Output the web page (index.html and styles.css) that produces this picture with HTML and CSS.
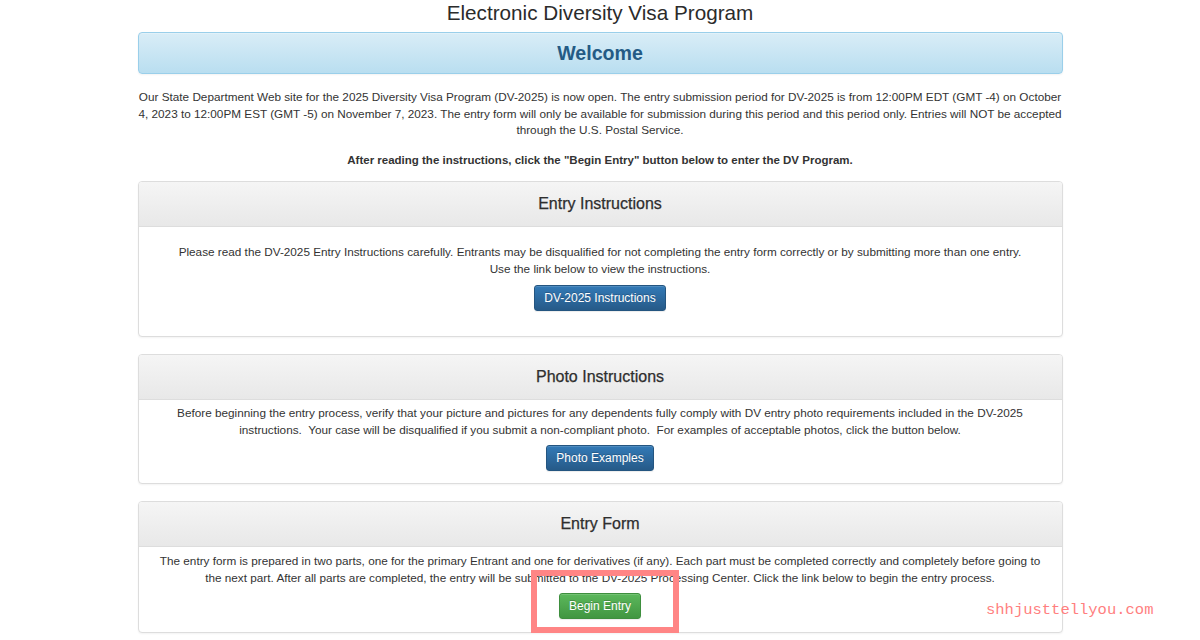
FILE: index.html
```html
<!DOCTYPE html>
<html lang="en">
<head>
<meta charset="utf-8">
<title>Electronic Diversity Visa Program</title>
<link rel="stylesheet" href="styles.css">
</head>
<body>
<div class="container">
  <h1 class="site-title">Electronic Diversity Visa Program</h1>
  <div class="welcome">Welcome</div>
  <p class="intro">Our State Department Web site for the 2025 Diversity Visa Program (DV-2025) is now open. The entry submission period for DV-2025 is from 12:00PM EDT (GMT -4) on October<br>4, 2023 to 12:00PM EST (GMT -5) on November 7, 2023. The entry form will only be available for submission during this period and this period only. Entries will NOT be accepted<br>through the U.S. Postal Service.</p>
  <p class="lead">After reading the instructions, click the "Begin Entry" button below to enter the DV Program.</p>

  <section class="panel">
    <div class="panel-heading">Entry Instructions</div>
    <div class="panel-body panel-body-first">
      <p class="panel-text">Please read the DV-2025 Entry Instructions carefully. Entrants may be disqualified for not completing the entry form correctly or by submitting more than one entry.<br>Use the link below to view the instructions.</p>
      <a class="btn btn-blue btn-first" href="#">DV-2025 Instructions</a>
    </div>
  </section>

  <section class="panel">
    <div class="panel-heading">Photo Instructions</div>
    <div class="panel-body">
      <p class="panel-text">Before beginning the entry process, verify that your picture and pictures for any dependents fully comply with DV entry photo requirements included in the DV-2025 instructions.&nbsp; Your case will be disqualified if you submit a non-compliant photo.&nbsp; For examples of acceptable photos, click the button below.</p>
      <a class="btn btn-blue" href="#">Photo Examples</a>
    </div>
  </section>

  <section class="panel">
    <div class="panel-heading">Entry Form</div>
    <div class="panel-body panel-body-last">
      <p class="panel-text">The entry form is prepared in two parts, one for the primary Entrant and one for derivatives (if any). Each part must be completed correctly and completely before going to the next part. After all parts are completed, the entry will be submitted to the DV-2025 Processing Center. Click the link below to begin the entry process.</p>
      <a class="btn btn-green" href="#">Begin Entry</a>
    </div>
  </section>
</div>
<div class="highlight-box"></div>
<div class="watermark">shhjusttellyou.com</div>
</body>
</html>
```
FILE: styles.css
```css
html, body {
  margin: 0;
  padding: 0;
  background: #fff;
}
body {
  font-family: "Liberation Sans", Arial, Helvetica, sans-serif;
  color: #333;
  font-size: 11.75px;
  overflow: hidden;
  height: 640px;
}
.container {
  width: 925px;
  margin: 0 auto;
}
.site-title {
  margin: 0 0 6px;
  font-size: 20.7px;
  line-height: 26px;
  font-weight: normal;
  text-align: center;
  color: #2b2b2b;
}
.welcome {
  height: 40px;
  line-height: 40px;
  text-align: center;
  font-size: 19.6px;
  font-weight: bold;
  color: #245b85;
  border: 1px solid #9acfea;
  border-radius: 4px;
  background: linear-gradient(to bottom, #d9edf7 0%, #b9def0 100%);
  box-shadow: inset 0 1px 0 rgba(255,255,255,.25), 0 1px 2px rgba(0,0,0,.05);
}
.intro {
  margin: 15px -4px 0;
  padding: 0;
  text-align: center;
  font-size: 11.75px;
  line-height: 16.5px;
  white-space: nowrap;
}
.lead {
  margin: 13.5px 0 12.5px;
  text-align: center;
  font-weight: bold;
  font-size: 11.5px;
  line-height: 16.5px;
}
.panel {
  border: 1px solid #ddd;
  border-radius: 4px;
  box-shadow: 0 1px 2px rgba(0,0,0,.05);
  margin-bottom: 17px;
  background: #fff;
  overflow: hidden;
}
.panel-heading {
  height: 44px;
  line-height: 44px;
  text-align: center;
  font-size: 16px;
  color: #2e2e2e;
  border-bottom: 1px solid #ddd;
  background: linear-gradient(to bottom, #f5f5f5 0%, #e8e8e8 100%);
  -webkit-text-stroke: 0.25px #2e2e2e;
}
.panel-body {
  padding: 4px 15px 12px;
  text-align: center;
}
.panel-body-first {
  padding: 16px 15px 25px;
}
.panel-body-last {
  padding: 5px 15px 13px;
}
.panel-text {
  margin: 0;
  line-height: 17px;
}
.btn {
  display: inline-block;
  box-sizing: border-box;
  height: 26px;
  line-height: 24px;
  padding: 0 9px;
  margin-top: 7px;
  font-size: 12px;
  color: #fff;
  text-decoration: none;
  border: 1px solid transparent;
  border-radius: 3px;
  text-shadow: 0 -1px 0 rgba(0,0,0,.2);
  box-shadow: inset 0 1px 0 rgba(255,255,255,.15), 0 1px 1px rgba(0,0,0,.075);
}
.btn-first {
  margin-top: 8px;
}
.btn-blue {
  background: linear-gradient(to bottom, #337ab7 0%, #265a88 100%);
  border-color: #245580;
}
.btn-green {
  background: linear-gradient(to bottom, #5cb85c 0%, #419641 100%);
  border-color: #3e8f3e;
}
.highlight-box {
  position: absolute;
  left: 531px;
  top: 570px;
  width: 148px;
  height: 63px;
  box-sizing: border-box;
  border: 6px solid #ff8585;
  pointer-events: none;
}
.watermark {
  position: absolute;
  left: 986px;
  top: 600px;
  font-family: "Liberation Mono", "DejaVu Sans Mono", monospace;
  font-size: 15.5px;
  line-height: 20px;
  color: #ff7f7f;
  letter-spacing: 0;
}
```
